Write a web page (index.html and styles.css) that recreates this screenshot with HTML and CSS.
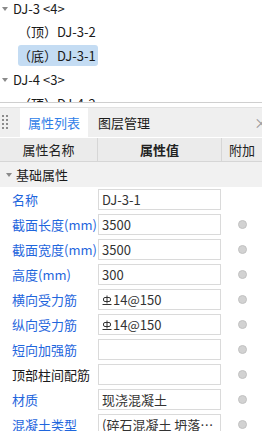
FILE: index.html
```html
<!DOCTYPE html>
<html lang="zh-CN">
<head>
  <meta charset="UTF-8">
  <meta name="viewport" content="width=device-width, initial-scale=1.0">
  <title>属性列表</title>
  <link rel="stylesheet" href="styles.css">
</head>
<body>
  <div class="tree">
    <div class="node first"><span class="caret"></span>DJ-3 &lt;4&gt;</div>
    <div class="leaf"><span class="item">（顶）DJ-3-2</span></div>
    <div class="leaf"><span class="item selected">（底）DJ-3-1</span></div>
    <div class="node"><span class="caret"></span>DJ-4 &lt;3&gt;</div>
    <div class="leaf"><span class="item">（顶）DJ-4-2</span></div>
  </div>
  <div class="splitter"></div>

  <div class="panel">
    <div class="tabs">
      <span class="grip"></span>
      <span class="tab active">属性列表</span>
      <span class="tab">图层管理</span>
      <span class="close">×</span>
    </div>

    <div class="row head">
      <div class="cell">属性名称</div>
      <div class="cell strong">属性值</div>
      <div class="cell">附加</div>
    </div>

    <div class="group"><span class="caret"></span>基础属性</div>

    <div class="row">
      <div class="name">名称</div>
      <div class="value"><div class="box">DJ-3-1</div></div>
      <div class="extra"></div>
    </div>
    <div class="row">
      <div class="name">截面长度(mm)</div>
      <div class="value"><div class="box">3500</div></div>
      <div class="extra"><span class="dot"></span></div>
    </div>
    <div class="row">
      <div class="name">截面宽度(mm)</div>
      <div class="value"><div class="box">3500</div></div>
      <div class="extra"><span class="dot"></span></div>
    </div>
    <div class="row">
      <div class="name">高度(mm)</div>
      <div class="value"><div class="box">300</div></div>
      <div class="extra"><span class="dot"></span></div>
    </div>
    <div class="row">
      <div class="name">横向受力筋</div>
      <div class="value"><div class="box"><svg class="rebar" width="10" height="10" viewBox="0 0 10 10"><rect x="1.5" y="2.5" width="7" height="4" rx="1.5" fill="none" stroke="#333" stroke-width="1"/><path d="M5 0.5V8.5M0.5 9.5H9.5" stroke="#333" stroke-width="1" fill="none"/></svg>14@150</div></div>
      <div class="extra"><span class="dot"></span></div>
    </div>
    <div class="row">
      <div class="name">纵向受力筋</div>
      <div class="value"><div class="box"><svg class="rebar" width="10" height="10" viewBox="0 0 10 10"><rect x="1.5" y="2.5" width="7" height="4" rx="1.5" fill="none" stroke="#333" stroke-width="1"/><path d="M5 0.5V8.5M0.5 9.5H9.5" stroke="#333" stroke-width="1" fill="none"/></svg>14@150</div></div>
      <div class="extra"><span class="dot"></span></div>
    </div>
    <div class="row">
      <div class="name">短向加强筋</div>
      <div class="value"><div class="box"></div></div>
      <div class="extra"><span class="dot"></span></div>
    </div>
    <div class="row">
      <div class="name plain">顶部柱间配筋</div>
      <div class="value"><div class="box"></div></div>
      <div class="extra"><span class="dot"></span></div>
    </div>
    <div class="row">
      <div class="name">材质</div>
      <div class="value"><div class="box">现浇混凝土</div></div>
      <div class="extra"><span class="dot"></span></div>
    </div>
    <div class="row">
      <div class="name">混凝土类型</div>
      <div class="value"><div class="box">(碎石混凝土 坍落度120~160mm)</div></div>
      <div class="extra"><span class="dot"></span></div>
    </div>
  </div>
</body>
</html>
```

FILE: styles.css
```css
body {
  margin: 0;
  width: 262px;
  height: 431px;
  overflow: hidden;
  font-family: "Noto Sans CJK SC", "Noto Sans", sans-serif;
  font-size: 13px;
  color: #1a1a1a;
  background: #fff;
}
.tree {
  height: 102px;
  overflow: hidden;
  border-bottom: 1px solid #cfcfcf;
}
.node, .leaf {
  height: 24px;
  line-height: 24px;
  white-space: nowrap;
}
.node.first {
  height: 20px;
  line-height: 17px;
}
.node .caret {
  display: inline-block;
  width: 0;
  height: 0;
  margin: 0 5px 2px 2px;
  border-left: 3px solid transparent;
  border-right: 3px solid transparent;
  border-top: 4px solid #8a8a8a;
  vertical-align: middle;
}
.leaf .item {
  display: inline-block;
  margin-left: 18px;
  padding: 0 2px 0 0;
  height: 21px;
  line-height: 21px;
  border-radius: 3px;
}
.leaf .selected {
  background: #c4dcf3;
}
.splitter {
  height: 4px;
}
.tabs {
  display: flex;
  align-items: stretch;
  height: 29px;
  background: #efefef;
  border-top: 1px solid #e2e2e2;
  white-space: nowrap;
}
.grip {
  width: 8px;
  height: 16px;
  margin: 6px 0 0 1px;
  background-image: radial-gradient(circle, #8c8c8c 1px, transparent 1.3px);
  background-size: 4px 4px;
}
.tab {
  line-height: 29px;
  padding: 0 8px;
}
.tab.active {
  margin-left: 11px;
  background: #fff;
  color: #2f7ee8;
}
.tab + .tab {
  padding-left: 10px;
}
.close {
  margin-left: auto;
  margin-right: -6px;
  line-height: 29px;
  font-size: 14px;
  color: #999;
}
.row {
  display: grid;
  grid-template-columns: 98px 124px 40px;
  height: 25px;
}
.row.head {
  height: 23px;
  margin-top: 1px;
  background: #ebebeb;
  border-bottom: 1px solid #d6d6d6;
  color: #222;
}
.head .cell {
  text-align: center;
  line-height: 23px;
  border-right: 1px solid #d6d6d6;
}
.head .cell:last-child {
  border-right: none;
}
.head .strong {
  font-weight: bold;
}
.group {
  height: 25px;
  line-height: 25px;
  background: #f1f1f1;
}
.group .caret {
  display: inline-block;
  width: 0;
  height: 0;
  margin: 0 4px 2px 6px;
  border-left: 3px solid transparent;
  border-right: 3px solid transparent;
  border-top: 4px solid #8a8a8a;
  vertical-align: middle;
}
.name {
  padding-left: 12px;
  line-height: 25px;
  color: #1f66dd;
  white-space: nowrap;
}
.name.plain {
  color: #1a1a1a;
}
.value {
  padding-top: 2px;
}
.box {
  box-sizing: border-box;
  width: 123px;
  height: 21px;
  padding: 0 2px 0 3px;
  border: 1px solid #dadada;
  line-height: 19px;
  color: #333;
  white-space: nowrap;
  overflow: hidden;
  text-overflow: ellipsis;
}
.rebar {
  vertical-align: 0;
  margin-right: 1px;
}
.extra {
  display: flex;
  align-items: center;
  justify-content: center;
}
.dot {
  box-sizing: border-box;
  width: 9px;
  height: 9px;
  border-radius: 50%;
  background: #d2d2d2;
  border: 1px solid #c2c2c2;
}
```
